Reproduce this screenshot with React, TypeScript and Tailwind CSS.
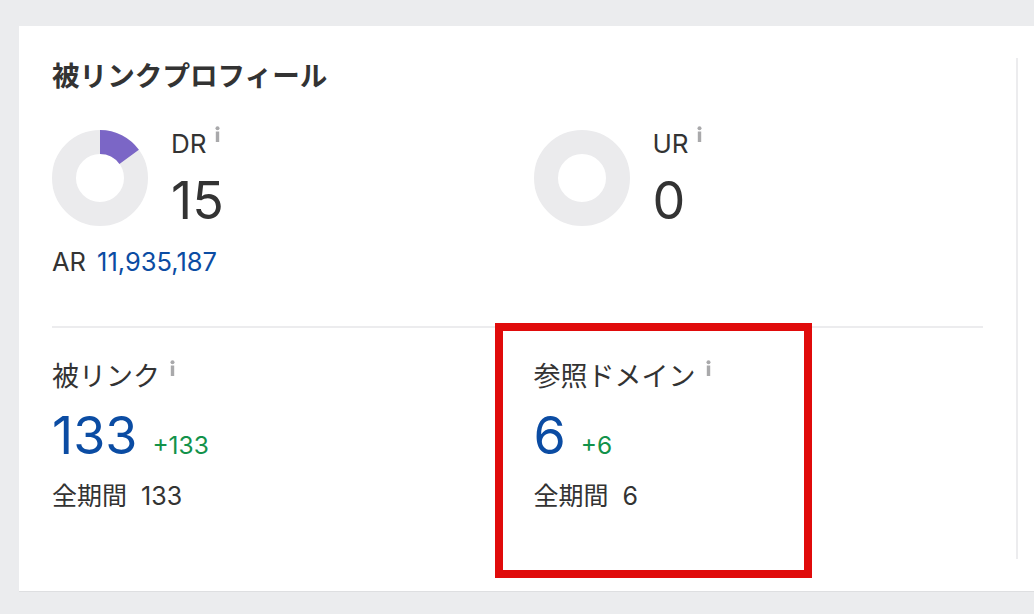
import React from "react";

const FONT = { fontFamily: 'Inter, "Noto Sans CJK JP", sans-serif' };

function Info({ className = "" }: { className?: string }) {
  return (
    <svg width="5" height="16" viewBox="0 0 5 16" className={className}>
      <circle cx="2.5" cy="2.2" r="2" fill="#a9a9ab" />
      <rect x="0.8" y="5.5" width="3.4" height="10.5" fill="#a9a9ab" />
    </svg>
  );
}

function Donut({ pct }: { pct: number }) {
  const r = 36;
  const c = 2 * Math.PI * r;
  return (
    <svg width="96" height="96" viewBox="0 0 96 96" className="shrink-0">
      <circle cx="48" cy="48" r={r} fill="none" stroke="#ebebed" strokeWidth="24" />
      {pct > 0 && (
        <circle
          cx="48"
          cy="48"
          r={r}
          fill="none"
          stroke="#7b66c6"
          strokeWidth="24"
          strokeDasharray={`${(c * pct) / 100} ${c}`}
          transform="rotate(-90 48 48)"
        />
      )}
    </svg>
  );
}

function Rating({ label, value, pct }: { label: string; value: string; pct: number }) {
  return (
    <div className="flex items-start gap-[23px]">
      <Donut pct={pct} />
      <div className="flex flex-col">
        <div className="flex items-start">
          <span className="text-[26px] leading-[28px] text-[#333]">{label}</span>
          <Info className="ml-[8px] -mt-[4px]" />
        </div>
        <div className="mt-[15px] text-[52px] leading-[56px] text-[#333]">{value}</div>
      </div>
    </div>
  );
}

function Metric({ label, value, delta, all }: { label: string; value: string; delta: string; all: string }) {
  return (
    <div className="flex flex-col">
      <div className="flex items-start">
        <span className="text-[27px] leading-[34px] text-[#333]">{label}</span>
        <Info className="ml-[10px] mt-[0px]" />
      </div>
      <div className="mt-[14px] flex items-baseline">
        <span className="text-[52px] leading-[56px] text-[#0b4ca3]">{value}</span>
        <span className="ml-[15px] text-[24.5px] leading-[28px] text-[#12924a]">{delta}</span>
      </div>
      <div className="mt-[17px] flex items-center text-[25px] leading-[30px] text-[#333]">
        <span>全期間</span>
        <span className="ml-[14px]">{all}</span>
      </div>
    </div>
  );
}

export default function App() {
  return (
    <div className="h-[614px] w-full overflow-hidden bg-[#ebecee] pl-[19px] pt-[26px]" style={FONT}>
      <div className="relative flex h-[566px] border-b border-[#dedfe1] bg-white">
        <div className="w-[997px] shrink-0 px-[33px] pt-[33px]">
          <h2 className="text-[27.6px] font-bold leading-[34px] text-[#333]">被リンクプロフィール</h2>
          <div className="mt-[37px] grid grid-cols-2 gap-x-[32px]">
            <div className="flex flex-col">
              <Rating label="DR" value="15" pct={15} />
              <div className="mt-[18px] flex items-center text-[25.5px] leading-[30px]">
                <span className="text-[#333]">AR</span>
                <span className="ml-[11px] text-[#0b4ca3]">11,935,187</span>
              </div>
            </div>
            <div>
              <Rating label="UR" value="0" pct={0} />
            </div>
          </div>
          <div className="mt-[49px] h-[2px] bg-[#ececee]" />
          <div className="mt-[32px] grid grid-cols-2 gap-x-[32px]">
            <Metric label="被リンク" value="133" delta="+133" all="133" />
            <Metric label="参照ドメイン" value="6" delta="+6" all="6" />
          </div>
        </div>
        <div className="my-[32px] w-[2px] shrink-0 bg-[#ececee]" />
        <div className="flex-1" />
        <div className="absolute left-[476px] top-[297px] h-[255px] w-[317px] border-[8px] border-[#e00b0b]" />
      </div>
    </div>
  );
}
